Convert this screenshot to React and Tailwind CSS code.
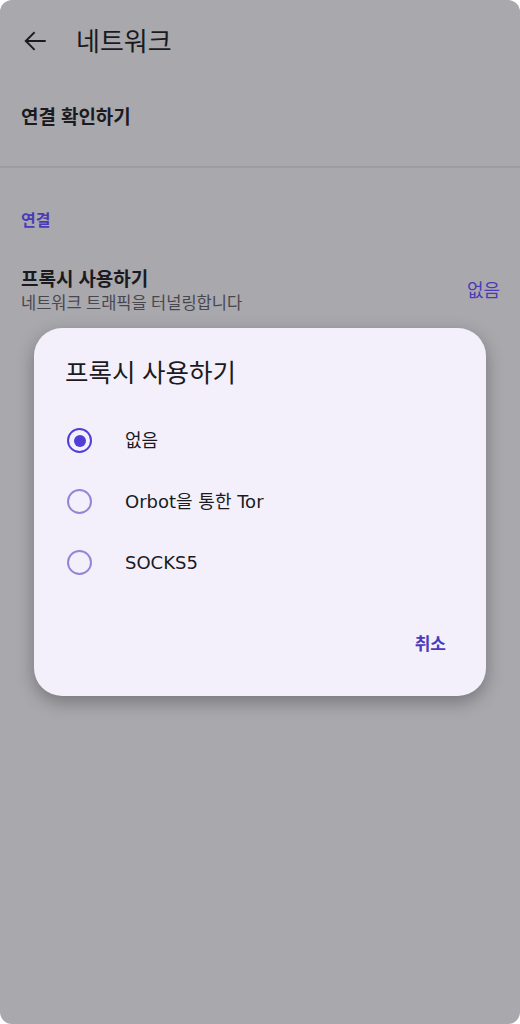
import React from 'react';

const font = { fontFamily: '"Noto Sans", "Noto Sans CJK KR", sans-serif' };
const optionFont = { fontFamily: '"DejaVu Sans", "Noto Sans CJK KR", sans-serif' };

const options = [
  { label: '없음', selected: true },
  { label: 'Orbot을 통한 Tor', selected: false },
  { label: 'SOCKS5', selected: false }
];

const Radio = ({ selected }) => (
  selected ? (
    <div className="w-[25px] h-[25px] rounded-full border-[2.5px] border-[#4f3fd6] flex items-center justify-center">
      <div className="w-[12px] h-[12px] rounded-full bg-[#4f3fd6]" />
    </div>
  ) : (
    <div className="w-[25px] h-[25px] rounded-full border-[2.5px] border-[#9286d8]" />
  )
);

export default function App() {
  return (
    <div className="w-[520px] h-[1024px] bg-white" style={font}>
      <div className="relative w-full h-full rounded-[12px] bg-[#a9a8ad] overflow-hidden text-[#1b1b1f]">
        {/* top bar */}
        <div className="h-[82px] flex items-center pl-[22px]">
          <svg width="26" height="26" viewBox="0 0 24 24" fill="none" stroke="#1b1b1f" strokeWidth="1.8" strokeLinecap="square">
            <path d="M21 12H4" />
            <path d="M11 4.5L3.5 12L11 19.5" />
          </svg>
          <span className="ml-[28px] text-[26px] leading-none">네트워크</span>
        </div>

        <div className="h-[84px] flex items-center px-[21px] pb-[14px]">
          <span className="text-[19px] font-bold">연결 확인하기</span>
        </div>
        <div className="h-[2px] bg-[#9d9ca1]" />

        <div className="pt-[41px] px-[21px] leading-[22px]">
          <span className="text-[16px] font-bold text-[#4a3bb8]">연결</span>
        </div>

        <div className="mt-[35px] flex items-center justify-between pl-[21px] pr-[20px]">
          <div className="flex flex-col">
            <span className="text-[19px] font-bold leading-[26px]">프록시 사용하기</span>
            <span className="text-[16.5px] leading-[22px] text-[#48474d]">네트워크 트래픽을 터널링합니다</span>
          </div>
          <span className="text-[18px] text-[#4a3bb8]">없음</span>
        </div>

        {/* dialog */}
        <div className="absolute left-[34px] top-[328px] w-[452px] h-[368px] rounded-[28px] bg-[#f3f0fb] shadow-[0_6px_18px_rgba(0,0,0,0.3)] flex flex-col">
          <div className="pt-[26px] pl-[31px] text-[25.5px] leading-[36px] text-[#1b1b1f]">프록시 사용하기</div>
          <div className="mt-[20px] flex flex-col">
            {options.map((o) => (
              <div key={o.label} className="h-[61px] flex items-center pl-[33px]">
                <Radio selected={o.selected} />
                <span className="ml-[33px] text-[18px] text-[#1b1b1f]" style={optionFont}>{o.label}</span>
              </div>
            ))}
          </div>
          <div className="mt-auto mb-[40px] flex justify-end pr-[40px]">
            <span className="text-[17px] font-bold text-[#4a3bb8]">취소</span>
          </div>
        </div>
      </div>
    </div>
  );
}
